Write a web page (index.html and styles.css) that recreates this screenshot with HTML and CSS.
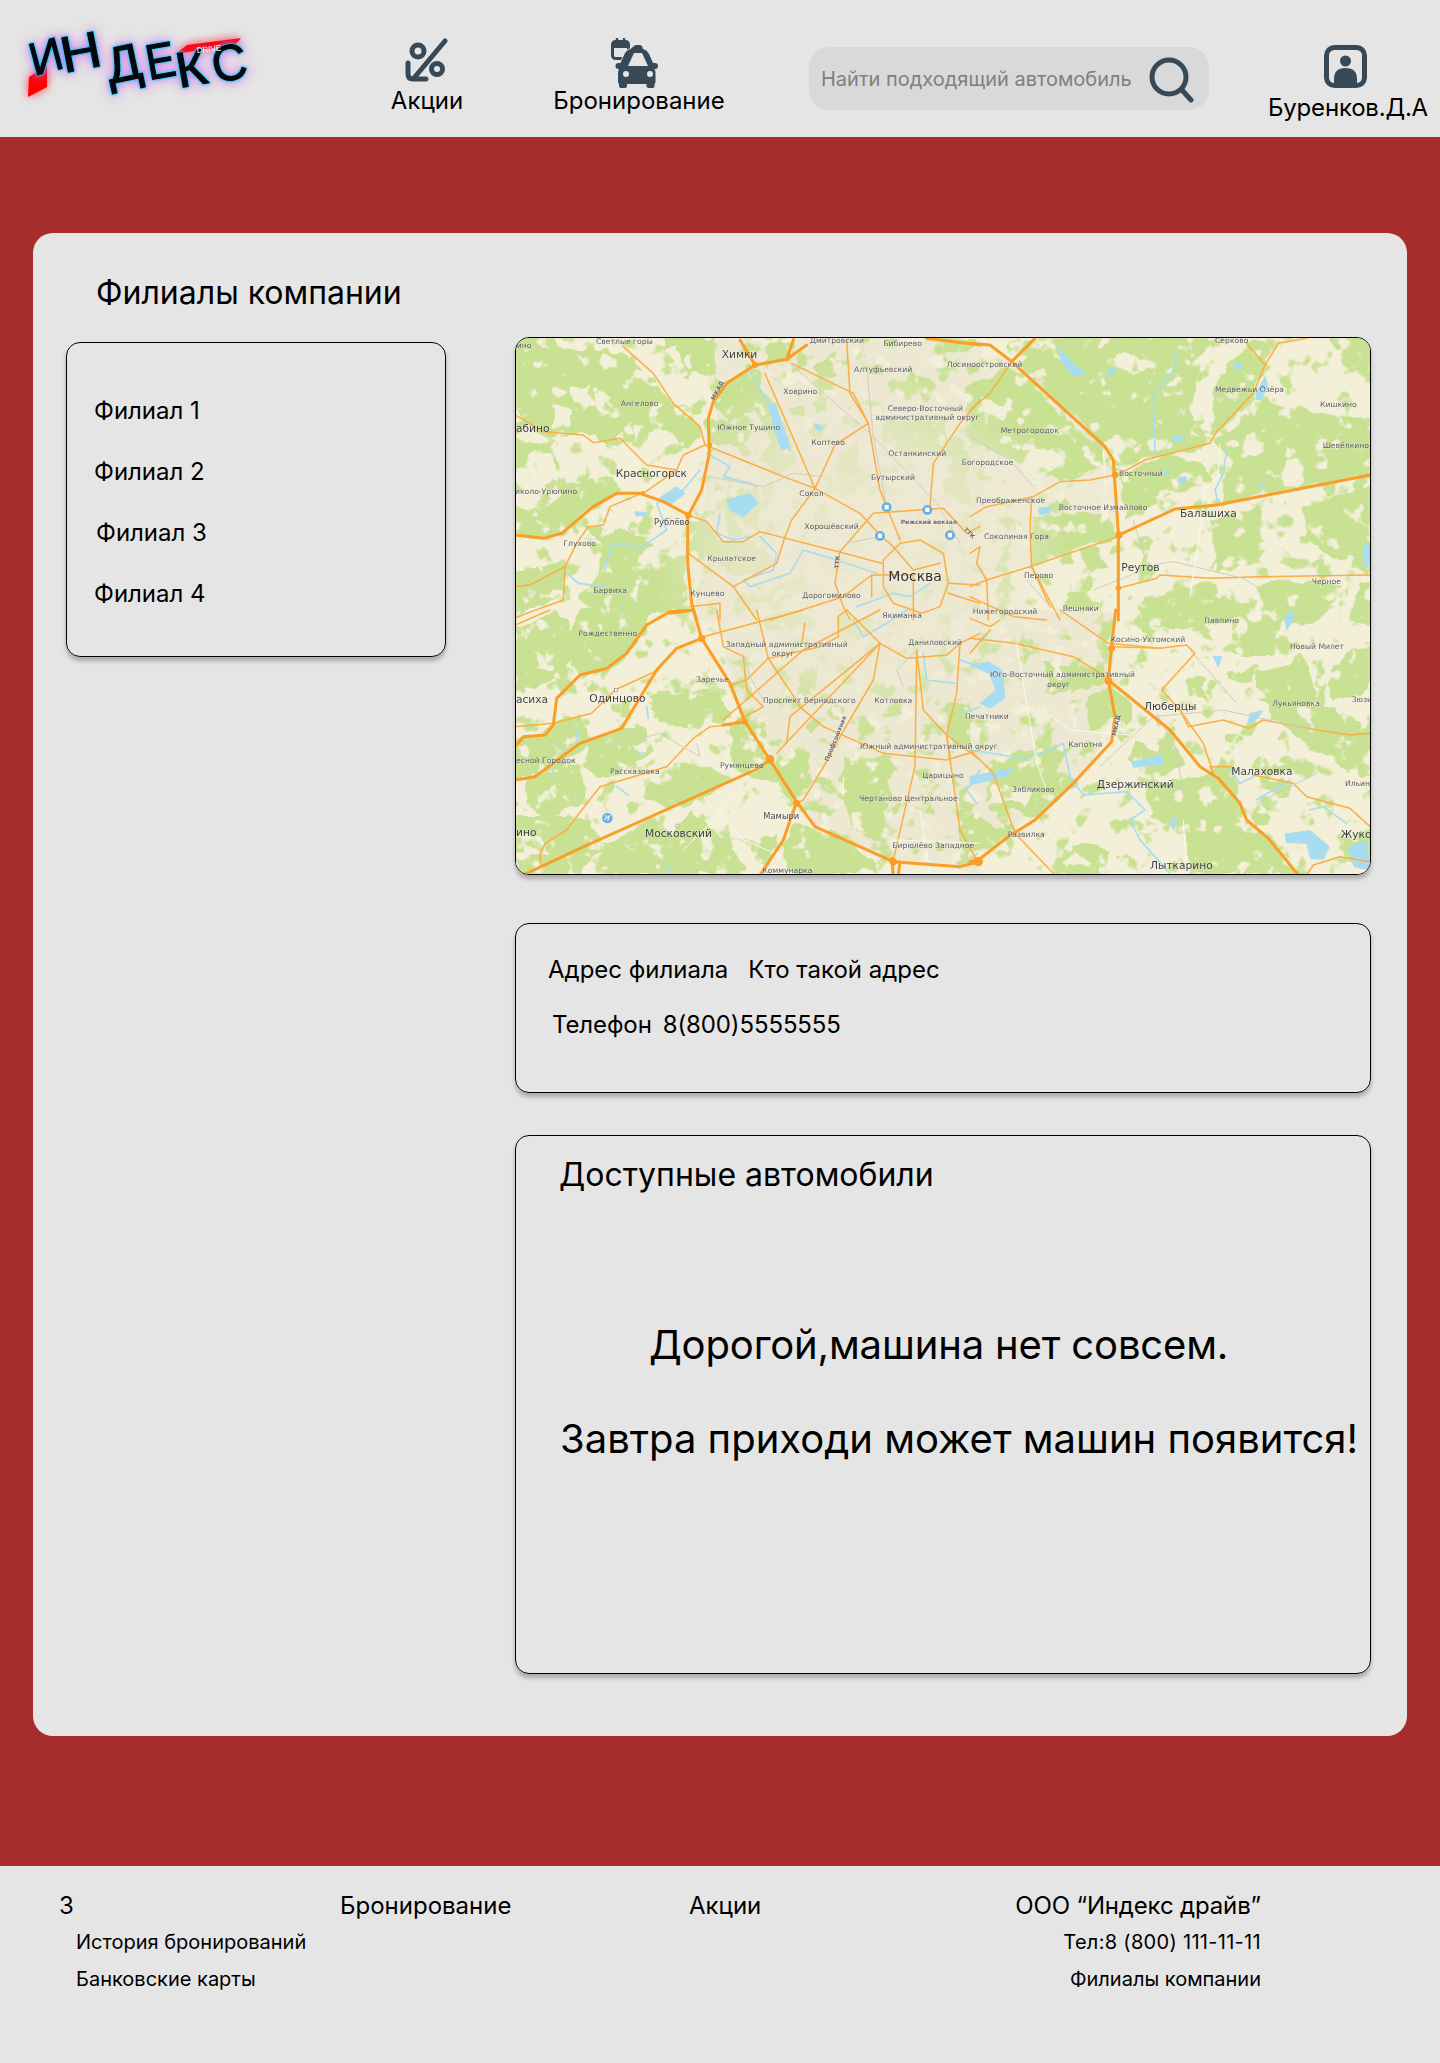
FILE: index.html
```html
<!DOCTYPE html>
<html lang="ru">
<head>
<meta charset="utf-8">
<title>Филиалы компании</title>
<link rel="stylesheet" href="styles.css">
</head>
<body>
<header class="header">
  <svg class="logo" width="240" height="100" viewBox="0 0 240 100">
    <g class="logo-red">
      <polygon points="9,77 27,66 27,87 8,97" fill="#f00"/>
      <polygon points="155,54 167,45 221,38 215,45" fill="#f00"/>
    </g>
    <g class="logo-word">
      <text transform="translate(14,76) rotate(-15)">И</text>
      <text transform="translate(44,73) rotate(-11) scale(1.22,1.1)">Н</text>
      <text transform="translate(90,84) rotate(-12) scale(1.12,1.1)">Д</text>
      <text transform="translate(129,80) rotate(-10) scale(.95,1.08)">Е</text>
      <text transform="translate(159,88) rotate(-10) scale(1.15,1.08)">К</text>
      <text transform="translate(195,83) rotate(-10) scale(1.05,1.1)">С</text>
    </g>
    <text class="logo-drive" transform="translate(177,53) rotate(-6)">DRIVE</text>
  </svg>
  <a class="nav-item nav-sale">
    <svg width="46" height="44" viewBox="0 0 46 44" fill="none" stroke="#374957" stroke-width="5" stroke-linecap="round" stroke-linejoin="round">
      <circle cx="14" cy="13" r="6"/>
      <circle cx="33" cy="31" r="5.5"/>
      <path d="M41 3 10 40M4 25v11q0 5 5 5h13"/>
    </svg>
    <span>Акции</span>
  </a>
  <a class="nav-item nav-book">
    <svg width="50" height="50" viewBox="0 0 50 50">
      <rect x="1.500" y="3.500" width="16" height="17" rx="3" fill="none" stroke="#374957" stroke-width="3"/>
      <path d="M2 4h15v6H2z" fill="#374957"/>
      <path d="M6 1v5M13 1v5" stroke="#374957" stroke-width="2.500" stroke-linecap="round"/>
      <path d="M23 8q1-1 3-1h2q2 0 3 1l1 3q4 1 6 5l4 9h2q3 0 3 3t-3 3h-.5q1 2 1 4v9q0 1-1 2v2q0 2-3 2h-2q-3 0-3-2v-2H16v2q0 2-3 2h-2q-3 0-3-2v-2q-1-1-1-2v-9q0-2 1-4h-.5q-3 0-3-3t3-3h2l4-9q2-4 6-5z" fill="#374957" stroke="#e5e5e5" stroke-width="1.500" paint-order="stroke"/>
      <path d="M23 15h8l6 13H17z" fill="#e5e5e5"/>
      <circle cx="15" cy="36" r="3" fill="#e5e5e5"/>
      <circle cx="39" cy="36" r="3" fill="#e5e5e5"/>
    </svg>
    <span>Бронирование</span>
  </a>
  <div class="search">
    <span class="search-hint">Найти подходящий автомобиль</span>
    <svg class="search-icon" width="46" height="46" viewBox="0 0 46 46" fill="none" stroke="#374957" stroke-width="5" stroke-linecap="round">
      <circle cx="20" cy="20" r="17"/>
      <path d="M33 33l9 10"/>
    </svg>
  </div>
  <a class="nav-item nav-user">
    <svg width="44" height="44" viewBox="0 0 44 44">
      <rect x="2.500" y="2.500" width="38" height="38" rx="8" fill="none" stroke="#374957" stroke-width="5"/>
      <circle cx="21.500" cy="16" r="5.500" fill="#374957"/>
      <path d="M10 40v-6q0-11 11.500-11T33 34v6z" fill="#374957"/>
    </svg>
    <span>Буренков.Д.А</span>
  </a>
</header>

<main class="page">
  <section class="card">
    <div class="col-left">
      <h1 class="title">Филиалы компании</h1>
      <ul class="branches">
        <li>Филиал 1</li>
        <li>Филиал 2</li>
        <li class="shift">Филиал 3</li>
        <li>Филиал 4</li>
      </ul>
    </div>
    <div class="col-right">
      <div class="map">
        <svg width="856" height="538" viewBox="0 0 856 538">
          <defs>
            <filter id="organic" x="0" y="0" width="100%" height="100%">
              <feTurbulence type="fractalNoise" baseFrequency=".045" numOctaves="3" seed="7" result="n"/>
              <feDisplacementMap in="SourceGraphic" in2="n" scale="16" xChannelSelector="R" yChannelSelector="G"/>
            </filter>
            <filter id="blotch-green" x="0" y="0" width="100%" height="100%" color-interpolation-filters="sRGB">
              <feTurbulence type="fractalNoise" baseFrequency=".05" numOctaves="3" seed="11"/>
              <feColorMatrix values="0 0 0 0 .784  0 0 0 0 .882  0 0 0 0 .573  9 0 0 0 -5.300"/>
            </filter>
            <filter id="blotch-cream" x="0" y="0" width="100%" height="100%" color-interpolation-filters="sRGB">
              <feTurbulence type="fractalNoise" baseFrequency=".06" numOctaves="3" seed="23"/>
              <feColorMatrix values="0 0 0 0 .953  0 0 0 0 .937  0 0 0 0 .851  0 9 0 0 -5.600"/>
            </filter>
            <radialGradient id="core">
              <stop offset="0" stop-color="#ede8d2" stop-opacity=".95"/>
              <stop offset=".6" stop-color="#ede8d2" stop-opacity=".7"/>
              <stop offset="1" stop-color="#ede8d2" stop-opacity="0"/>
            </radialGradient>
          </defs>
          <rect width="856" height="538" fill="#f3efd9"/>

          <g class="land">
            <g transform="translate(-5,-7) scale(.33333)">
              <g class="city"><path d="M590 30 900 30 1090 30 1410 30 1410 870 560 870 580 500 620 330z"/></g>
              <g class="green">
                <path d="M15 25 130 25 145 60 190 72 250 60 330 68 420 150 490 230 560 275 575 325 520 345 480 300 440 340 400 370 350 330 290 345 220 310 130 312 60 285 15 240z"/>
                <path d="M470 25 612 25 612 125 540 140 480 85z"/>
                <path d="M15 330 130 345 150 440 220 475 300 440 322 482 250 530 155 610 100 622 15 610z"/>
                <path d="M235 590 325 592 420 640 345 720 430 720 530 680 530 810 420 862 300 870 210 800 275 740 270 640z"/>
                <path d="M535 575 600 600 640 640 715 640 790 690 720 745 600 680 535 670z"/>
                <path d="M15 730 150 710 160 800 60 830 15 845z"/>
                <path d="M600 270 720 305 690 345 600 335z"/>
                <path d="M640 160 735 120 790 240 850 360 860 405 800 430 760 390 790 330 730 235 650 275 612 215z"/>
                <path d="M975 380 1045 350 1070 450 1030 490 980 450z"/>
                <path d="M1125 280 1300 280 1300 360 1190 372 1130 330z"/>
                <path d="M1320 335 1410 320 1410 525 1330 510 1310 450z"/>
                <path d="M700 835 880 730 885 775 800 815 730 800z"/>
                <path d="M780 30 850 40 830 85 770 110z"/>
                <path d="M920 100 980 80 975 135 930 135z"/>
                <path d="M1200 130 1280 170 1260 210 1215 170z"/>
                <path d="M660 490 740 470 745 620 660 620z"/>
                <path d="M920 540 945 540 945 590 925 590z"/>
                <path d="M1290 30 1390 30 1390 50 1310 60z"/>
                <path d="M840 240 880 235 880 260 845 260z"/>
                <path d="M900 270 950 290 940 320 905 300z"/>
              </g>
              <g class="cream">
                <path d="M185 170 220 175 250 230 200 240z"/>
                <path d="M250 190 285 200 280 235 255 225z"/>
                <path d="M135 230 180 240 170 290 130 280z"/>
                <path d="M430 75 510 60 530 130 460 130z"/>
                <path d="M60 370 125 385 150 500 85 540 20 520 20 420z"/>
                <path d="M350 530 480 510 490 560 400 600z"/>
                <path d="M380 300 470 310 500 360 430 420 370 400z"/>
              </g>
            </g>
            <g transform="translate(455,-7) scale(.33333)">
              <g class="green">
                <path d="M155 110 220 25 730 25 680 70 665 230 660 320 720 340 530 385 440 400 400 350z"/>
                <path d="M780 100 860 30 885 100 850 190 730 320 730 220 760 130z"/>
                <path d="M810 285 850 205 950 235 1050 265 1200 260 1200 430 1000 465 750 520 790 400 740 340z"/>
                <path d="M505 830 650 765 700 870 510 870z"/>
                <path d="M465 430 610 385 700 400 720 455 590 495 470 565z"/>
                <path d="M1000 540 1200 470 1200 730 1140 700 1050 660 1000 600z"/>
                <path d="M600 790 700 760 780 790 830 870 600 870z"/>
                <path d="M330 670 380 660 400 700 345 720z"/>
                <path d="M1080 30 1200 25 1200 100 1130 100z"/>
                <path d="M720 570 860 540 880 700 740 720z"/>
                <path d="M870 760 1050 760 1100 780 1050 870 880 870z"/>
                <path d="M290 790 340 790 380 830 290 830z"/>
                <path d="M1180 760 1200 760 1200 870 1140 870z"/>
              </g>
              <g class="cream">
                <path d="M450 75 530 90 550 110 490 120 440 100z"/>
                <path d="M665 220 695 220 695 265 665 265z"/>
                <path d="M585 170 630 150 635 190 590 200z"/>
                <path d="M830 320 880 330 880 360 810 380z"/>
                <path d="M950 390 1000 395 1000 450 950 470 930 430z"/>
                <path d="M860 640 930 640 990 680 950 720 870 700z"/>
                <path d="M1100 690 1140 690 1130 730 1090 720z"/>
                <path d="M400 330 450 330 460 390 410 370z"/>
                <path d="M730 60 780 70 760 130 710 100z"/>
              </g>
              <g class="city">
                <path d="M0 70 150 100 300 240 410 360 435 440 440 600 185 700 40 760 0 780z" opacity=".8"/>
              </g>
              <g class="green">
                <path d="M190 560 400 555 435 620 190 700z"/>
                <path d="M0 170 120 110 270 260 395 355 400 400 270 450 130 390 0 320 0 250z"/>
              </g>
              <g class="cream">
                <path d="M40 210 110 240 100 270 40 250z"/>
                <path d="M190 360 280 370 300 400 200 440 150 410z"/>
              </g>
            </g>
            <g transform="translate(-5,273) scale(.33333)">
              <g class="city"><path d="M620 0 1410 0 1410 790 1150 750 1020 700 920 650 800 460 700 320 660 200z"/></g>
              <g class="green">
                <path d="M15 60 140 10 200 90 160 200 60 240 15 240z"/>
                <path d="M200 10 430 0 405 45 345 140 290 180 215 195 170 130z"/>
                <path d="M15 400 90 380 130 340 210 320 240 400 130 470 60 500 15 500z"/>
                <path d="M410 250 620 250 660 320 560 350 460 340 420 300z"/>
                <path d="M240 400 340 360 400 360 420 420 360 470 260 500 230 460z"/>
                <path d="M660 360 700 360 770 440 800 510 730 500 670 450z"/>
                <path d="M420 510 540 460 650 500 560 570 470 590 410 560z"/>
                <path d="M70 500 215 480 210 590 110 620 50 560z"/>
                <path d="M15 620 180 620 240 640 280 720 200 790 40 790 15 720z"/>
                <path d="M270 710 420 640 500 670 540 610 650 700 700 780 560 790 290 790z"/>
                <path d="M850 640 960 660 1040 720 1100 770 1000 790 840 790 820 700z"/>
                <path d="M810 440 900 430 890 540 840 560 790 490z"/>
                <path d="M1000 450 1120 450 1130 580 1100 690 1040 660 1000 560z"/>
                <path d="M730 690 790 680 780 760 745 750z"/>
                <path d="M870 190 915 190 910 250 860 250z"/>
                <path d="M960 300 1000 295 985 335 960 325z"/>
                <path d="M740 330 770 340 760 380 725 350z"/>
                <path d="M1330 280 1410 270 1410 400 1340 400 1310 340z"/>
                <path d="M770 10 870 0 840 50 780 60z"/>
                <path d="M1000 0 1100 30 1040 90 990 70z"/>
                <path d="M1160 280 1190 285 1180 320 1120 315z"/>
                <path d="M900 320 920 330 910 360 885 345z"/>
                <path d="M1350 620 1400 620 1410 740 1370 760z"/>
              </g>
              <g class="cream">
                <path d="M90 120 130 130 120 180 80 170z"/>
                <path d="M20 680 90 680 110 730 50 740z"/>
                <path d="M480 420 560 420 580 460 500 470z"/>
              </g>
            </g>
            <g transform="translate(455,273) scale(.33333)">
              <g class="city"><path d="M0 0 420 0 430 100 415 210 430 390 310 520 190 630 120 680 0 750z"/></g>
              <g class="green">
                <path d="M525 0 710 0 700 60 600 50 530 40z"/>
                <path d="M790 50 930 0 900 130 800 130z"/>
                <path d="M860 200 990 150 1040 260 980 310 860 260z"/>
                <path d="M1100 170 1200 100 1200 240 1080 270z"/>
                <path d="M900 280 1060 300 1200 340 1200 420 1140 490 1060 420 980 370 910 330z"/>
                <path d="M650 215 700 215 700 260 650 260z"/>
                <path d="M770 190 860 180 830 220z"/>
                <path d="M350 270 420 230 430 320 360 350z"/>
                <path d="M430 240 480 290 470 340 440 330z"/>
                <path d="M230 160 390 180 400 210 310 240 230 220z"/>
                <path d="M500 400 570 430 600 360 640 460 540 520 490 450z"/>
                <path d="M540 520 690 510 760 450 810 570 800 620 890 690 980 790 650 790 630 640 540 620z"/>
                <path d="M880 470 960 450 970 480 900 490z"/>
                <path d="M300 410 240 470 300 500 320 520 200 610 130 600 50 560 70 470 120 440z"/>
                <path d="M0 620 130 660 60 710 0 720z"/>
                <path d="M280 730 350 700 410 720 420 790 300 790z"/>
                <path d="M900 520 960 520 960 550 900 550z"/>
                <path d="M1130 690 1200 650 1200 760 1150 750z"/>
                <path d="M850 615 890 610 890 640 860 650z"/>
                <path d="M770 370 810 380 800 410 770 400z"/>
              </g>
              <g class="cream">
                <path d="M400 780 640 650 660 790 400 790z"/>
                <path d="M60 530 180 540 170 580 60 570z"/>
              </g>
            </g>
          </g>
          <rect class="blotch-green" width="856" height="538"/>
          <rect class="blotch-cream" width="856" height="538"/>
          <ellipse cx="345" cy="210" rx="210" ry="190" fill="url(#core)"/>

          <g transform="translate(-5,-7) scale(.33333)">
            <g class="water">
              <path d="M720 125 770 210 800 300 840 360"/>
              <path d="M610 360 590 370 660 410 640 440 720 460 740 470"/>
              <path d="M285 720 300 650 340 640 390 655 470 600 440 520 520 480 570 420"/>
              <path d="M160 720 205 760 285 770"/>
              <path d="M630 550 620 610 670 630 720 620"/>
              <path d="M750 620 800 670 790 720 700 750 720 770 840 730 880 660 980 690 1100 730"/>
              <path d="M1040 830 1150 790 1200 800 1260 760"/>
            </g>
            <path class="water-fill" d="M650 510 720 490 745 520 700 560 660 540zM440 510 500 470 525 490 480 525zM780 220 795 220 840 350 815 360 790 290zM375 545 410 548 408 558 378 558zM915 280 940 292 932 302 918 298z"/>
            <g class="road">
              <path d="M340 50 430 130 490 220 570 290 585 345"/>
              <path d="M15 255 100 305 220 315 250 338 330 325 410 405 500 420 520 375 585 345 820 440 915 475 1050 550 1110 615 1150 650"/>
              <path d="M395 490 300 530 280 585 235 590 200 640 165 710 160 810 50 850 15 865"/>
              <path d="M15 770 60 765 165 710"/>
              <path d="M400 490 500 420"/>
              <path d="M535 555 590 575 640 635 700 635 750 605 985 665 1115 700"/>
              <path d="M535 670 670 770 740 870"/>
              <path d="M670 770 800 700 825 620 845 570 915 475 975 345 1075 280"/>
              <path d="M765 130 915 475"/>
              <path d="M845 100 1030 190 1075 280 1110 480 1170 630"/>
              <path d="M1010 30 1020 190 1075 280"/>
              <path d="M1260 530 1270 400 1350 280 1410 210"/>
              <path d="M990 660 975 760 1000 830 1020 870"/>
              <path d="M990 665 1090 550 1300 535 1370 610 1410 590"/>
              <path d="M780 870 1000 800 1085 735 1115 735"/>
              <path d="M1150 820 1120 770 1120 690 1170 640 1230 630 1300 670 1315 760 1290 830 1235 850 1150 820"/>
              <path d="M1150 650 1210 720 1290 700M1120 735 1210 735 1210 870M1315 790 1410 820M1315 760 1410 765"/>
              <path d="M630 870 630 820 540 830"/>
              <path d="M1085 735 1085 800"/>
            </g>
            <path class="rail" d="M840 100 1090 320 1280 520 1350 640M1070 110 1090 320 1130 530M600 440 760 470 850 430 940 440M1110 620 1010 640"/>
            <g class="thick">
              <path d="M560 870 545 820 533 700 533 560 575 480 598 370 595 265 610 215 650 160 735 105 830 88 850 30 850 0"/>
              <path d="M830 88 890 45"/>
              <path d="M15 615 100 625 155 610 250 530 320 490 390 490 460 515 535 555"/>
              <path d="M1250 25 1410 45"/>
              <path d="M690 30 735 105"/>
              <path d="M480 850 550 840"/>
              <circle cx="735" cy="105" r="9"/><circle cx="535" cy="555" r="10"/><circle cx="398" cy="490" r="7"/><circle cx="600" cy="345" r="7"/>
            </g>
            <g class="bus">
              <circle cx="1130" cy="532" r="15"/><circle cx="1252" cy="540" r="15"/><circle cx="1110" cy="618" r="15"/><circle cx="1320" cy="616" r="15"/>
              <rect x="1124" y="525" width="12" height="13"/><rect x="1246" y="533" width="12" height="13"/><rect x="1104" y="611" width="12" height="13"/><rect x="1314" y="609" width="12" height="13"/>
            </g>
          </g>

          <g transform="translate(455,-7) scale(.33333)">
            <path class="water-fill" d="M265 50 320 110 350 130 310 138 272 90zM790 100 815 100 815 115 795 115zM410 120 440 115 420 140zM610 320 645 318 635 330 610 335zM858 190 885 140 893 165 875 208 860 208zM1180 650 1200 640 1200 710 1180 700zM625 445 650 440 645 460 625 455zM580 420 600 425 585 435zM205 535 245 530 240 550 208 553zM860 460 885 465 870 470z"/>
            <g class="water">
              <path d="M620 70 610 120 550 200 555 370"/>
              <path d="M770 360 760 430 735 480 745 520"/>
            </g>
            <g class="road">
              <path d="M0 240 60 190 125 95"/>
              <path d="M450 430 525 390 720 340 740 305 850 190 885 105 925 40 1010 25"/>
              <path d="M830 40 885 105"/>
              <path d="M0 560 50 530 190 500 270 455 360 450 435 435"/>
              <path d="M0 770 50 750 180 710 445 620"/>
              <path d="M185 500 180 600 185 710 240 830"/>
              <path d="M445 775 560 745 570 735 720 745 870 740 1200 735"/>
              <path d="M50 750 55 870M185 710 270 870"/>
              <path d="M0 670 30 650 20 700 50 750"/>
              <path d="M0 800 130 860 230 870"/>
            </g>
            <path class="rail" d="M0 320 120 390 190 470M170 750 240 830M370 780 570 700 610 695 820 745 920 810M490 570 530 700"/>
            <path class="wroad" d="M400 360 405 440M750 340 745 440 700 480 700 525M700 530 660 800"/>
            <g class="thick">
              <path d="M0 40 60 45 125 95 405 350 430 390 445 610 445 870"/>
              <path d="M125 95 195 25"/>
              <path d="M447 615 615 537 740 525 1200 435"/>
              <circle cx="447" cy="615" r="11"/><circle cx="435" cy="435" r="10"/><circle cx="445" cy="775" r="8"/>
            </g>
          </g>

          <g transform="translate(-5,273) scale(.33333)">
            <g class="water">
              <path d="M1030 30 1060 80 1130 40 1190 0"/>
              <path d="M1240 130 1250 210 1335 220"/>
              <path d="M1360 310 1410 290"/>
              <path d="M1350 150 1410 170"/>
              <path d="M1410 480 1370 540 1400 580"/>
              <path d="M410 290 415 325M320 530 355 555M200 360 200 395M130 480 130 510M380 430 405 430M150 410 140 400M470 760 480 790"/>
            </g>
            <g class="road">
              <path d="M15 45 120 0"/>
              <path d="M620 0 640 110 700 140 710 240 760 290 660 345 600 350 550 385 470 470 270 530 215 600 170 660 105 700 90 735 92 765"/>
              <path d="M15 350 130 340 245 310 315 240 445 180"/>
              <path d="M740 0 775 145 875 295 940 350 1120 430 1310 450 1410 420"/>
              <path d="M775 145 710 210 660 225M775 145 930 110 985 80 985 20 1010 0"/>
              <path d="M1110 100 840 320 830 400"/>
              <path d="M1110 100 1090 210 990 380 950 455 880 570 860 580"/>
              <path d="M640 330 880 120 1110 0M800 430 1110 100"/>
              <path d="M885 40 875 100M1110 100 1190 145 1310 135 1350 100 1410 70"/>
              <path d="M1220 120 1215 470 1150 750"/>
              <path d="M1220 120 1240 300 1310 375 1350 660 1400 750"/>
              <path d="M1350 100 1340 250 1310 375 1320 450"/>
              <path d="M1310 375 1410 450"/>
              <path d="M580 80 880 0M1010 0 1110 100"/>
            </g>
            <path class="rail" d="M560 400 570 440 450 370 300 410M700 130 720 200 760 270M1220 120 1160 180 1180 230"/>
            <path class="wroad" d="M590 570 700 690 820 740M1000 500 1000 560M520 720 620 620 660 560M1230 600 1260 790M1150 690 1410 700"/>
            <g class="thick">
              <path d="M550 0 575 85 660 220 705 335 780 450 860 575 915 650 1150 755 1350 770 1410 755"/>
              <path d="M40 795 210 715 735 480 780 450"/>
              <path d="M575 85 500 115 440 180 335 355 210 400 75 500 15 510"/>
              <path d="M550 0 480 5 410 45 350 130 290 175 210 195 140 265 130 345 105 375 40 380 15 410"/>
              <path d="M860 575 820 690 750 795"/>
              <path d="M705 335 640 345"/>
              <circle cx="780" cy="448" r="13"/><circle cx="575" cy="85" r="11"/><circle cx="705" cy="335" r="9"/><circle cx="860" cy="580" r="11"/><circle cx="1150" cy="755" r="11"/>
              <path d="M1145 745 1150 795M1170 755 1165 795"/>
            </g>
            <circle cx="292" cy="624" r="16" fill="#6cb0ea"/>
            <path d="M282 628 302 616M296 618 294 632M290 620 284 616" stroke="#fff" stroke-width="3" fill="none"/>
            <circle cx="40" cy="243" r="4" fill="#fff" stroke="#888" stroke-width="2"/>
            <rect x="314" y="235" width="9" height="9" fill="#fff" stroke="#888" stroke-width="2"/>
            <circle cx="502" cy="647" r="5" fill="#fff" stroke="#888" stroke-width="2"/>
          </g>

          <g transform="translate(455,273) scale(.33333)">
            <path class="water-fill" d="M0 165 55 155 95 180 105 265 60 295 30 280 78 240 58 190zM485 455 545 445 575 432 578 462 490 472zM945 672 1020 662 1078 710 1060 748 1022 745 1010 700 950 698zM842 310 878 302 860 328 832 342zM1135 712 1188 692 1200 780 1152 770zM945 20 965 0 970 30 950 60zM730 140 755 140 745 170zM600 630 620 620 610 660zM0 500 130 475 110 498 0 525z"/>
            <g class="water">
              <path d="M0 420 160 445 240 420 280 400 300 500 340 555 470 545 525 600 480 630 510 690 600 790"/>
              <path d="M780 480 810 520 850 500M1020 600 1060 590 1130 640M860 570 960 510"/>
            </g>
            <g class="road">
              <path d="M0 85 135 100 310 140 415 205"/>
              <path d="M0 25 60 50 90 30M270 0 415 100 570 115 650 105 675 130 575 240 630 300 655 350 760 330 835 355 880 330 1040 360 1140 375 1200 370"/>
              <path d="M0 130 60 60M425 110 575 115"/>
              <path d="M630 300 700 400 730 490 720 470 785 470"/>
              <path d="M850 495 970 520 1010 560 1140 595 1200 650"/>
              <path d="M0 420 70 490 135 670 250 790"/>
              <path d="M1010 795 1030 765 1110 740 1200 755"/>
            </g>
            <path class="rail" d="M390 470 550 320 760 300 1030 360M560 310 620 420 640 560M660 120 800 280M1040 490 860 580"/>
            <path class="wroad" d="M140 100 200 460 230 540M210 340 240 315 300 360 480 375M640 630 650 790"/>
            <g class="thick">
              <path d="M25 750 115 680 195 630 310 520 425 395 435 320 415 210 425 110 437 0"/>
              <path d="M415 210 600 360 690 470 745 505 810 580 830 630 895 685 985 795"/>
              <path d="M0 755 25 750"/>
              <circle cx="25" cy="755" r="14"/><circle cx="415" cy="212" r="12"/><circle cx="425" cy="115" r="10"/>
            </g>
          </g>

          <g transform="translate(-5,-7) scale(.33333)" class="labels">
            <text x="20" y="55">ино</text><text x="258" y="43">Светлые горы</text><text x="635" y="85" class="big">Химки</text>
            <text x="900" y="38">Дмитровский</text><text x="1120" y="47">Бибирево</text><text x="1032" y="125">Алтуфьевский</text>
            <text x="1310" y="112">Лосиноостровский</text><text x="820" y="193">Ховрино</text><text x="332" y="228">Ангелово</text>
            <text x="1133" y="242">Северо-Восточный</text><text x="1096" y="269">административный округ</text>
            <text x="18" y="307" class="big">абино</text><text x="622" y="300">Южное Тушино</text><text x="904" y="344">Коптево</text>
            <text x="1135" y="377">Останкинский</text><text x="1355" y="404">Богородское</text><text x="317" y="440" class="big">Красногорск</text>
            <text x="1083" y="451">Бутырский</text><text x="15" y="493">иколо-Урюпино</text><text x="868" y="498">Сокол</text>
            <text x="432" y="584" class="mid">Рублёво</text><text x="1172" y="581" class="tiny">Рижский вокзал</text><text x="883" y="598">Хорошёвский</text>
            <text x="160" y="648">Глухово</text><text x="592" y="693">Крылатское</text><text x="1135" y="752" class="huge">Москва</text>
            <text x="250" y="788">Барвиха</text><text x="541" y="798">Кунцево</text><text x="877" y="805">Дорогомилово</text><text x="1117" y="865">Якиманка</text>
            <text transform="translate(613,212) rotate(-62)" class="tiny">МКАД</text>
            <text transform="translate(986,716) rotate(-85)" class="tiny">ТТК</text>
            <text transform="translate(1360,600) rotate(45)" class="tiny">ТТК</text>
          </g>
          <g transform="translate(455,-7) scale(.33333)" class="labels">
            <text x="735" y="40">Серково</text><text x="735" y="187">Медвежьи Озёра</text><text x="1050" y="230">Кишкино</text>
            <text x="92" y="308">Метрогородок</text><text x="1058" y="355">Шевёлкино</text><text x="447" y="437">Восточный</text>
            <text x="18" y="520">Преображенское</text><text x="266" y="540">Восточное Измайлово</text><text x="630" y="560" class="big">Балашиха</text>
            <text x="42" y="627">Соколиная Гора</text><text x="162" y="743">Перово</text><text x="454" y="723" class="big">Реутов</text>
            <text x="1025" y="763">Черное</text><text x="278" y="842">Вешняки</text><text x="8" y="853">Нижегородский</text>
          </g>
          <g transform="translate(-5,273) scale(.33333)" class="labels">
            <text x="205" y="79">Рождественно</text><text x="647" y="110">Западный административный</text><text x="785" y="138">округ</text>
            <text x="1195" y="105">Даниловский</text><text x="558" y="215">Заречье</text><text x="238" y="275" class="big">Одинцово</text>
            <text x="18" y="280" class="big">асиха</text><text x="759" y="280">Проспект Вернадского</text><text x="1093" y="280">Котловка</text>
            <text x="1365" y="328">Печатники</text><text x="18" y="458">есной Городок</text><text x="300" y="492">Рассказовка</text>
            <text x="630" y="475">Румянцево</text><text x="1050" y="417">Южный административный округ</text><text x="1237" y="503">Царицыно</text>
            <text x="1047" y="572">Чертаново Центральное</text><text x="760" y="626" class="mid">Мамыри</text><text x="18" y="678" class="big">ино</text>
            <text x="405" y="682" class="big">Московский</text><text x="1147" y="714">Бирюлёво Западное</text><text x="757" y="790">Коммунарка</text>
            <text transform="translate(955,455) rotate(-68)" class="tiny">Профсоюзная</text>
          </g>
          <g transform="translate(455,273) scale(.33333)" class="labels">
            <text x="703" y="40">Павлино</text><text x="960" y="118">Новый Милет</text><text x="422" y="95">Косино-Ухтомский</text>
            <text x="60" y="202">Юго-Восточный административный</text><text x="232" y="230">округ</text><text x="522" y="300" class="big">Люберцы</text>
            <text x="907" y="287">Лукьяновка</text><text x="1145" y="277">Зюзи</text><text x="295" y="412">Капотня</text>
            <text x="784" y="495" class="big">Малаховка</text><text x="1125" y="528">Ильин</text><text x="380" y="535" class="big">Дзержинский</text>
            <text x="126" y="545">Зябликово</text><text x="113" y="680">Развилка</text><text x="1112" y="685" class="big">Жуко</text>
            <text x="540" y="776" class="big">Лыткарино</text>
            <text transform="translate(438,378) rotate(-78)" class="tiny">МКАД</text>
          </g>
        </svg>
      </div>

      <div class="address">
        <p class="addr-line"><span>Адрес филиала</span><span>Кто такой адрес</span></p>
        <p class="phone-line"><span>Телефон</span><span>8(800)5555555</span></p>
      </div>

      <div class="cars">
        <h2 class="cars-title">Доступные автомобили</h2>
        <p class="msg msg-one">Дорогой,машина нет совсем.</p>
        <p class="msg msg-two">Завтра приходи может машин появится!</p>
      </div>
    </div>
  </section>
</main>

<footer class="footer">
  <div class="foot-col foot-a">
    <strong>З</strong>
    <span>История бронирований</span>
    <span>Банковские карты</span>
  </div>
  <div class="foot-col foot-b"><strong>Бронирование</strong></div>
  <div class="foot-col foot-c"><strong>Акции</strong></div>
  <div class="foot-col foot-d">
    <strong class="foot-brand">ООО “Индекс драйв”</strong>
    <span class="foot-phone">Тел:8 (800) 111-11-11</span>
    <span>Филиалы компании</span>
  </div>
</footer>
</body>
</html>
```
FILE: styles.css
```css
* { box-sizing: border-box; }
html, body { margin: 0; padding: 0; }
body {
  width: 1440px;
  background: #a72d2d;
  color: #000;
  font-family: Inter, "Noto Sans", sans-serif;
}

/* header */
.header {
  display: flex;
  align-items: flex-start;
  height: 137px;
  padding-left: 20px;
  background: #e5e5e5;
}
.logo { flex: none; overflow: visible; }
.logo-word {
  font: 400 46px "Liberation Sans", sans-serif;
  fill: #05070c;
  stroke: #05070c;
  stroke-width: 1;
  filter: drop-shadow(0 0 1px #10d0ff) drop-shadow(0 0 1px #10d0ff) drop-shadow(0 0 6px rgba(205, 90, 235, .85));
}
.logo-red { filter: drop-shadow(0 0 5px rgba(255, 0, 0, .75)); }
.logo-drive { font: 400 8px "Liberation Sans", sans-serif; fill: #fff; }
.nav-item {
  display: flex;
  flex: none;
  flex-direction: column;
  align-items: center;
  font-size: 24px;
  line-height: 29px;
  white-space: nowrap;
}
.nav-sale { width: 72px; margin: 38px 0 0 131px; gap: 4px; }
.nav-book { width: 172px; margin: 38px 0 0 90px; }
.nav-book svg { margin: 0 6px -2px 0; }
.nav-user { width: 158px; margin: 45px 0 0 60px; gap: 4px; letter-spacing: -.2px; }
.nav-user svg { margin-right: 4px; }
.search {
  display: flex;
  flex: none;
  align-items: center;
  justify-content: space-between;
  width: 400px;
  height: 63px;
  margin: 47px 0 0 84px;
  padding: 0 14px 0 12px;
  border-radius: 20px;
  background: #d9d9d9;
}
.search-hint { color: #808080; font-size: 20px; white-space: nowrap; }
.search-icon { margin-top: 3px; }

/* main */
.page { padding: 96px 33px 130px; }
.card {
  display: grid;
  grid-template-columns: 380px 856px;
  column-gap: 69px;
  height: 1503px;
  padding-left: 33px;
  border-radius: 20px;
  background: #e5e5e5;
}
.title {
  margin: 0;
  padding: 40px 0 0 30px;
  font-size: 32px;
  font-weight: 400;
  line-height: 39px;
}
.branches {
  height: 315px;
  margin: 30px 0 0;
  padding: 53px 0 0 27px;
  list-style: none;
  border: 1px solid #000;
  border-radius: 14px;
  box-shadow: 0 4px 4px rgba(0, 0, 0, .25);
  font-size: 24px;
  line-height: 29px;
}
.branches li { margin-bottom: 32px; }
.branches .shift { padding-left: 2px; }
.col-right { padding-top: 104px; }
.map {
  height: 538px;
  overflow: hidden;
  border: 1px solid #000;
  border-radius: 14px;
  box-shadow: 0 4px 4px rgba(0, 0, 0, .25);
}
.map svg { display: block; margin: -1px; filter: blur(.3px); }
.land { filter: url(#organic); }
.blotch-green { filter: url(#blotch-green); }
.blotch-cream { filter: url(#blotch-cream); }
.city path { fill: #ede8d2; }
.green path { fill: #c8e192; stroke: #c8e192; stroke-width: 10; stroke-linejoin: round; }
.cream path { fill: #f3efd9; stroke: #f3efd9; stroke-width: 8; stroke-linejoin: round; }
.water path { fill: none; stroke: #a8dcf0; stroke-width: 5; stroke-linejoin: round; stroke-linecap: round; }
.water-fill { fill: #a8dcf0; stroke: #a8dcf0; stroke-width: 3; stroke-linejoin: round; }
.road path { fill: none; stroke: #fbae42; stroke-width: 4.5; stroke-linejoin: round; stroke-linecap: round; }
.thick path { fill: none; stroke: #fa9e26; stroke-width: 9; stroke-linejoin: round; stroke-linecap: round; }
.thick circle { fill: #fa9e26; }
.rail { fill: none; stroke: #cfcdc4; stroke-width: 3; }
.wroad { fill: none; stroke: #fbf9ee; stroke-width: 3; }
.bus circle { fill: #6cb0ea; }
.bus rect { fill: #fff; }
.labels text {
  font-family: "DejaVu Sans", sans-serif;
  font-size: 23px;
  fill: #5b5b64;
  paint-order: stroke;
  stroke: rgba(255, 255, 255, .3);
  stroke-width: 3px;
}
.labels .big { font-size: 32px; fill: #3f3f47; }
.labels .mid { font-size: 25px; fill: #4a4a52; }
.labels .huge { font-size: 42px; fill: #2f2f35; }
.labels .tiny { font-size: 18px; font-weight: 700; fill: #6a6a70; }

.address {
  height: 170px;
  margin-top: 48px;
  padding-top: 31px;
  border: 1px solid #000;
  border-radius: 14px;
  box-shadow: 0 4px 4px rgba(0, 0, 0, .25);
  font-size: 24px;
  line-height: 29px;
}
.address p { display: flex; margin: 0; }
.address .addr-line { gap: 20px; padding-left: 32px; }
.address .phone-line { gap: 11px; margin-top: 26px; padding-left: 36px; letter-spacing: -.12px; }
.cars {
  height: 539px;
  margin-top: 42px;
  border: 1px solid #000;
  border-radius: 14px;
  box-shadow: 0 4px 4px rgba(0, 0, 0, .25);
}
.cars-title {
  margin: 0;
  padding: 19px 0 0 43px;
  font-size: 32px;
  font-weight: 400;
  line-height: 39px;
}
.msg { margin: 0; font-size: 40px; line-height: 48px; white-space: nowrap; }
.msg-one { margin-top: 127px; padding-left: 133px; letter-spacing: -.15px; }
.msg-two { margin-top: 46px; padding-left: 44px; }

/* footer */
.footer {
  display: flex;
  height: 197px;
  padding-top: 25px;
  background: #e5e5e5;
  font-size: 24px;
  line-height: 29px;
}
.foot-col { display: flex; flex: none; flex-direction: column; }
.foot-col strong { font-weight: 400; white-space: nowrap; }
.foot-col span { margin-top: 8px; font-size: 20px; line-height: 29px; white-space: nowrap; }
.foot-a { width: 281px; margin-left: 59px; }
.foot-a span { padding-left: 17px; }
.foot-b { width: 349px; }
.foot-c { width: 329px; }
.foot-d { width: 243px; align-items: flex-end; }
.foot-brand { letter-spacing: -.15px; }
.foot-phone { letter-spacing: .3px; }
```
